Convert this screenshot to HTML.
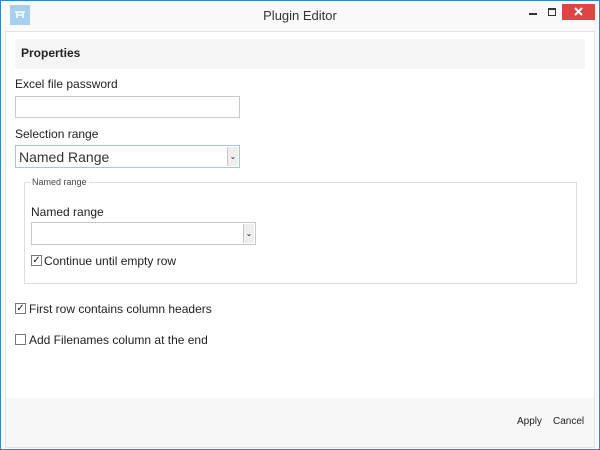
<!DOCTYPE html>
<html><head><style>
*{margin:0;padding:0;box-sizing:border-box}
body{width:600px;height:450px;overflow:hidden;background:#f9f9f9;font-family:"Liberation Sans",sans-serif;color:#222;position:relative}
.abs{position:absolute}
.panel{position:absolute;left:5px;top:31px;width:590px;height:417px;background:#fff;border:1px solid #e2e2e2}
.lbl{position:absolute;font-size:12px;color:#222}
.box{position:absolute;background:#fff;border:1px solid #c8c8c8}
.cb{position:absolute;width:11px;height:11px;border:1px solid #777;background:#fff;font-size:10px;line-height:9px;text-align:center;color:#222}
.arr{position:absolute;right:1px;top:1px;bottom:1px;width:11px;background:#eee;border-left:1px solid #c8c8c8}
</style></head><body>
<div class="abs" style="left:10px;top:5px;width:20px;height:20px;background:#a6cff0"></div>
<svg class="abs" style="left:10px;top:5px" width="20" height="20"><path d="M5 7h10M7 7v6M13 7v6M8 10h4" stroke="#fff" stroke-width="1.5" fill="none"/></svg>
<div class="lbl" style="left:0;width:600px;text-align:center;top:8px;font-size:13px;color:#333">Plugin Editor</div>
<div class="abs" style="left:529px;top:13px;width:8px;height:2px;background:#333"></div>
<div class="abs" style="left:548px;top:8px;width:8px;height:8px;border:1px solid #333;border-top-width:2px"></div>
<div class="abs" style="left:562px;top:4px;width:33px;height:16px;background:#e04343"></div>
<svg class="abs" style="left:562px;top:4px" width="33" height="16"><path d="M13 4l7 7M20 4l-7 7" stroke="#fff" stroke-width="2"/></svg>
<div class="panel"></div>
<div class="abs" style="left:15px;top:39px;width:570px;height:30px;background:#f5f5f5"></div>
<div class="lbl" style="left:21px;top:46px;font-weight:bold">Properties</div>
<div class="lbl" style="left:15px;top:77px">Excel file password</div>
<div class="box" style="left:15px;top:96px;width:225px;height:22px"></div>
<div class="lbl" style="left:15px;top:127px">Selection range</div>
<div class="box" style="left:15px;top:145px;width:225px;height:23px;border-color:#9ec5ea"><div class="lbl" style="left:3px;top:3px;font-size:14px;color:#333">Named Range</div><div class="arr" style="font-size:8px;text-align:center;line-height:20px">⌄</div></div>
<div class="abs" style="left:24px;top:182px;width:553px;height:102px;border:1px solid #ddd"></div>
<div class="lbl" style="left:30px;top:177px;font-size:9px;background:#fff;padding:0 2px;color:#444">Named range</div>
<div class="lbl" style="left:31px;top:205px">Named range</div>
<div class="box" style="left:31px;top:222px;width:225px;height:23px"><div class="arr" style="font-size:8px;text-align:center;line-height:20px">⌄</div></div>
<div class="cb" style="left:31px;top:255px">✓</div>
<div class="lbl" style="left:44px;top:254px">Continue until empty row</div>
<div class="cb" style="left:15px;top:303px">✓</div>
<div class="lbl" style="left:29px;top:302px">First row contains column headers</div>
<div class="cb" style="left:15px;top:334px"></div>
<div class="lbl" style="left:29px;top:333px">Add Filenames column at the end</div>
<div class="abs" style="left:6px;top:398px;width:588px;height:49px;background:#f7f7f7"></div>
<div class="lbl" style="left:517px;top:416px;font-size:10px">Apply</div>
<div class="lbl" style="left:553px;top:416px;font-size:10px">Cancel</div>
<div class="abs" style="left:0;top:0;width:600px;height:450px;border:1px solid #2b88d8"></div>
</body></html>
